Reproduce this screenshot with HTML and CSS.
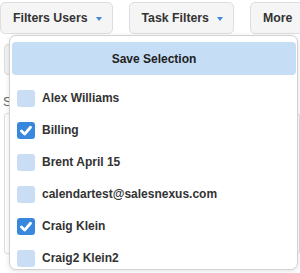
FILE: index.html
```html
<!DOCTYPE html>
<html>
<head>
	<meta charset="utf-8">
	<meta name="viewport" content="width=device-width, initial-scale=1">
	<title>Filters</title>
	<link rel="stylesheet" href="styles.css">
</head>
<body>
	<div class="toolbar">
		<div class="btn">Filters Users <span class="caret"></span></div>
		<div class="btn">Task Filters <span class="caret"></span></div>
		<div class="btn">More</div>

		<div class="menu">
			<div class="save">Save Selection</div>
			<div class="list">
				<label class="row"><span class="cb"></span>Alex Williams</label>
				<label class="row"><span class="cb on"><svg viewBox="0 0 18 18"><path d="M4.2 9.6 L7.6 12.8 L13.8 5.6"/></svg></span>Billing</label>
				<label class="row"><span class="cb"></span>Brent April 15</label>
				<label class="row"><span class="cb"></span>calendartest@salesnexus.com</label>
				<label class="row"><span class="cb on"><svg viewBox="0 0 18 18"><path d="M4.2 9.6 L7.6 12.8 L13.8 5.6"/></svg></span>Craig Klein</label>
				<label class="row"><span class="cb"></span>Craig2 Klein2</label>
			</div>
		</div>
	</div>

	<div class="page">
		<div class="ghost"></div>
		<div class="lbl">Search</div>
		<div class="box"></div>
	</div>
</body>
</html>
```

FILE: styles.css
```css
html,body{height: 273px;}
body{margin: 0;background: #fff;font-family: "Liberation Sans", Arial, sans-serif;color: #333;overflow: hidden;}
.toolbar{position: relative;display: flex;gap: 16px;padding-top: 2px;}
.btn{height: 32px;box-sizing: border-box;display: flex;align-items: center;gap: 8px;padding: 0 10px 0 12px;border: 1px solid #dedede;border-radius: 5px;background: #f5f5f5;font-size: 12.3px;font-weight: bold;color: #333;white-space: nowrap;}
.caret{width: 0;height: 0;margin-top: 1px;border-left: 3.5px solid transparent;border-right: 3.5px solid transparent;border-top: 4px solid #3b8be0;}

.menu{position: absolute;left: 9px;top: 35px;width: 289px;height: 235px;box-sizing: border-box;padding: 6px 1px 0 2px;background: #fff;border: 1px solid #d2d2d2;border-radius: 7px;box-shadow: 0 1px 5px rgba(0,0,0,0.12);overflow: hidden;z-index: 2;}
.save{height: 33px;display: flex;align-items: center;justify-content: center;background: #c5ddf5;border-radius: 4px;font-size: 12px;font-weight: bold;color: #222;}
.list{margin-top: 7px;}
.row{height: 32px;display: flex;align-items: center;gap: 7px;padding-left: 5px;font-size: 12px;font-weight: bold;color: #333;cursor: pointer;}
.cb{width: 18px;height: 17px;border-radius: 3px;background: #c9ddf4;flex: none;display: flex;}
.cb.on{background: #3a87de;}
.cb svg{width: 18px;height: 17px;}
.cb path{fill: none;stroke: #fff;stroke-width: 3;stroke-linecap: round;stroke-linejoin: round;}

.page{padding: 10px 0 0 4px;}
.ghost{width: 120px;height: 31px;box-sizing: border-box;border: 1px solid #dcdcdc;border-radius: 4px;background: #f3f3f3;}
.lbl{margin: 19px 0 0 -1px;font-size: 13px;line-height: 16px;color: #666;}
.box{margin-top: 3px;height: 139px;border: 1px solid #dddddd;border-radius: 3px;}
```
